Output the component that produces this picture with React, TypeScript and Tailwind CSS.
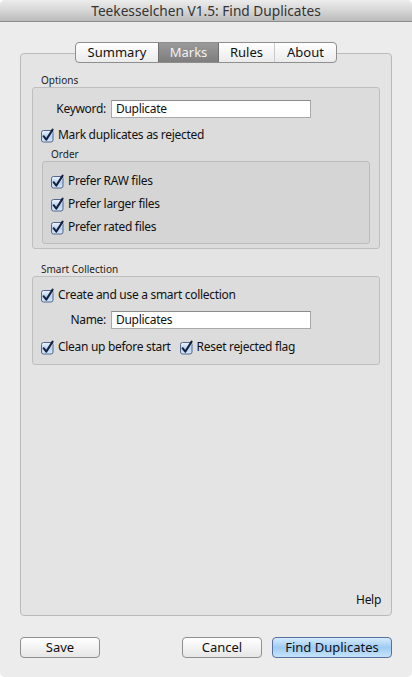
import React from 'react';

// Mac OS X style "Find Duplicates" dialog

const Check = () => (
  <svg width="15" height="15" viewBox="0 0 15 15" className="shrink-0">
    <defs>
      <linearGradient id="cbg" x1="0" y1="0" x2="0" y2="1">
        <stop offset="0" stopColor="#eef5fd" />
        <stop offset="0.5" stopColor="#b9d3f1" />
        <stop offset="1" stopColor="#d7e8fa" />
      </linearGradient>
    </defs>
    <rect x="1.5" y="2.5" width="11.5" height="11.5" rx="2" fill="url(#cbg)" stroke="#53678a" />
    <path d="M3.6 8.2 L6.3 11.6 L12.6 1.6" fill="none" stroke="#14213f" strokeWidth="2" strokeLinecap="round" strokeLinejoin="round" />
  </svg>
);

const CheckRow = ({ label }: { label: string }) => (
  <div className="flex items-center gap-[3px] h-[18px]">
    <Check />
    <span>{label}</span>
  </div>
);

const FieldRow = ({ label, value }: { label: string; value: string }) => (
  <div className="flex items-center h-[18px]">
    <span className="w-[73px] text-right">{label}</span>
    <div className="ml-[5px] w-[200px] h-[18px] bg-white border border-[#a9a9a9] border-t-[#8c8c8c] px-[4px] leading-[16px]">
      {value}
    </div>
  </div>
);

const tabs = ['Summary', 'Marks', 'Rules', 'About'];
const tabWidths = ['w-[82px]', 'w-[61px]', 'w-[55px]', 'w-[62px]'];

export default function App() {
  return (
    <div className="w-[412px] h-[677px] bg-white font-['Lucida_Grande','Noto_Sans',sans-serif] text-[12px] tracking-[-0.3px] text-[#111]">
      <div className="w-full h-full bg-[#ececec] rounded-[5px] overflow-hidden flex flex-col">
        {/* Title bar */}
        <div className="h-[22px] shrink-0 bg-gradient-to-b from-[#ececec] via-[#d6d6d6] to-[#bababa] border-b border-[#8b8b8b] text-center text-[13.7px] tracking-normal leading-[21px] text-[#333]">
          Teekesselchen V1.5: Find Duplicates
        </div>

        <div className="flex-1 flex flex-col px-[20px] pt-[20px] pb-[19px]">
          {/* Tabs */}
          <div className="relative z-10 flex justify-center -mb-[10px]">
            <div className="flex h-[21px] rounded-[4px] border border-[#8e8e8e] bg-gradient-to-b from-white to-[#ebebeb] overflow-hidden text-[13px] tracking-normal leading-[19px]">
              {tabs.map((t, i) => (
                <div
                  key={t}
                  className={`${tabWidths[i]} text-center ${
                    t === 'Marks'
                      ? 'bg-gradient-to-b from-[#9a9a9a] to-[#7e7e7e] text-[#f2f2f2] border-x border-[#6f6f6f]'
                      : ''
                  } ${t === 'About' ? 'border-l border-[#c9c9c9]' : ''}`}
                >
                  {t}
                </div>
              ))}
            </div>
          </div>

          {/* Tab panel */}
          <div className="flex-1 flex flex-col bg-[#e4e4e4] border border-[#bababa] rounded-[4px] px-[11px] pt-[20px]">
            <div className="pl-[9px] text-[10px] tracking-normal leading-[13px] text-[#222]">Options</div>
            <div className="bg-[#dcdcdc] border border-[#bfbfbf] rounded-[3px] pt-[12px] pb-[4px]">
              <FieldRow label="Keyword:" value="Duplicate" />
              <div className="mt-[8px] pl-[7px]">
                <CheckRow label="Mark duplicates as rejected" />
              </div>
              <div className="mt-[4px] pl-[18px] text-[10px] tracking-normal leading-[13px] text-[#222]">Order</div>
              <div className="mx-[9px] bg-[#d5d5d5] border border-[#bcbcbc] rounded-[3px] pt-[10px] pb-[7px] pl-[7px] flex flex-col gap-[5px]">
                <CheckRow label="Prefer RAW files" />
                <CheckRow label="Prefer larger files" />
                <CheckRow label="Prefer rated files" />
              </div>
            </div>

            <div className="mt-[14px] pl-[9px] text-[10px] tracking-normal leading-[13px] text-[#222]">Smart Collection</div>
            <div className="bg-[#dcdcdc] border border-[#bfbfbf] rounded-[3px] pt-[9px] pb-[8px]">
              <div className="pl-[7px]">
                <CheckRow label="Create and use a smart collection" />
              </div>
              <div className="mt-[7px]">
                <FieldRow label="Name:" value="Duplicates" />
              </div>
              <div className="mt-[9px] pl-[7px] flex gap-[8px]">
                <CheckRow label="Clean up before start" />
                <CheckRow label="Reset rejected flag" />
              </div>
            </div>

            <div className="mt-auto self-end pb-[6px] -mr-[1px] text-[12px]">Help</div>
          </div>

          {/* Buttons */}
          <div className="mt-[21px] flex items-center text-[13px] tracking-normal">
            <button className="w-[80px] h-[21px] rounded-[4px] border border-[#8f8f8f] bg-gradient-to-b from-white to-[#e6e6e6] leading-[19px]">
              Save
            </button>
            <button className="ml-auto w-[80px] h-[21px] rounded-[4px] border border-[#8f8f8f] bg-gradient-to-b from-white to-[#e6e6e6] leading-[19px]">
              Cancel
            </button>
            <button className="ml-[10px] w-[120px] h-[21px] rounded-[4px] border border-[#56719f] bg-gradient-to-b from-[#d6eafc] via-[#9ecbf3] to-[#c6e4fb] leading-[19px]">
              Find Duplicates
            </button>
          </div>
        </div>
      </div>
    </div>
  );
}
